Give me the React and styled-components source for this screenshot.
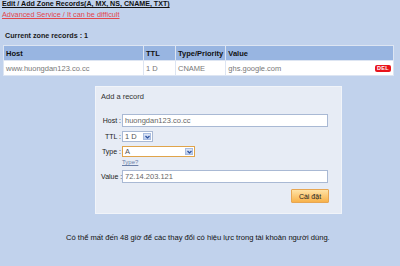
import React from "react";
import styled, { createGlobalStyle } from "styled-components";

const colors = {
  page: "#c1d2ec",
  header: "#98b5e1",
  panel: "#e7ecf5",
  text: "#1a1a1a",
  muted: "#777",
  link: "#e2474c",
  border: "#a9b9d4"
};

const GlobalStyle = createGlobalStyle`
  body {
    margin: 0;
    background: ${colors.page};
    font-family: "Liberation Sans", Arial, sans-serif;
    color: ${colors.text};
  }
`;

const Page = styled.div`
  width: 400px;
  height: 266px;
  overflow: hidden;
  background: ${colors.page};
  display: flex;
  flex-direction: column;
`;

const Title = styled.a`
  display: block;
  margin: -1px 0 0 2px;
  font-size: 7.1px;
  line-height: 10px;
  font-weight: bold;
  color: #111;
  text-decoration: underline;
`;

const AdvancedLink = styled.a`
  display: block;
  margin: 1px 0 0 2px;
  font-size: 7.3px;
  line-height: 10px;
  color: ${colors.link};
  text-decoration: underline;
`;

const SectionLabel = styled.div`
  margin: 11px 0 0 5px;
  font-size: 7.2px;
  line-height: 10px;
  font-weight: bold;
`;

const Table = styled.table`
  margin: 4px 0 0 3px;
  width: 391px;
  border-collapse: collapse;
  border: 1px solid #dde5f2;
  font-size: 7.5px;

  th,
  td {
    height: 14px;
    padding: 0 2px;
    text-align: left;
    border: 1px solid #dde5f2;
    white-space: nowrap;
  }

  th {
    background: ${colors.header};
    font-weight: bold;
    color: #111;
  }

  td {
    background: #fff;
    color: ${colors.muted};
  }
`;

const ValueCell = styled.td`
  position: relative;
`;

const DelBadge = styled.span`
  position: absolute;
  right: 2px;
  top: 4px;
  padding: 0 2px;
  height: 7px;
  line-height: 7px;
  font-size: 5.5px;
  font-weight: bold;
  color: #fff;
  background: #e8141b;
  border-radius: 2px;
  letter-spacing: 0.3px;
`;

const Panel = styled.div`
  margin: 10px 0 0 95px;
  width: 247px;
  height: 128px;
  box-sizing: border-box;
  background: ${colors.panel};
  border: 1px solid #f1f4f9;
  padding: 5px 0 0 5px;
`;

const PanelTitle = styled.div`
  font-size: 7.5px;
  line-height: 9px;
  color: #333;
`;

const FormGrid = styled.div`
  margin-top: 13px;
  display: grid;
  grid-template-columns: 20px 206px;
  column-gap: 1px;
  row-gap: 4px;
  align-items: center;
`;

const Label = styled.div`
  font-size: 7px;
  color: #222;
  text-align: right;
  white-space: nowrap;
`;

const TextInput = styled.div`
  height: 13px;
  box-sizing: border-box;
  border: 1px solid ${colors.border};
  background: #fff;
  font-size: 7.5px;
  line-height: 11px;
  padding-left: 2px;
  color: #666;
`;

const Select = styled.div`
  width: ${(p) => p.width}px;
  height: ${(p) => p.h}px;
  box-sizing: border-box;
  border: 1px solid ${(p) => (p.focused ? "#e0a44a" : colors.border)};
  background: #fff;
  display: flex;
  align-items: center;
  justify-content: space-between;
  font-size: 7.5px;
  padding: 0 1px 0 2px;
  color: #555;
`;

const Arrow = styled.span`
  width: 8px;
  height: 7px;
  background: linear-gradient(#dde6f7, #b7c9ec);
  border: 1px solid #a8bce0;
  box-sizing: border-box;
  display: flex;
  align-items: center;
  justify-content: center;
`;

const HelpLink = styled.a`
  font-size: 6px;
  line-height: 7px;
  color: #6b7fa8;
  text-decoration: underline;
  margin-top: -2px;
`;

const ButtonRow = styled.div`
  display: flex;
  justify-content: flex-end;
  padding-right: 12px;
  margin-top: 6px;
`;

const Button = styled.button`
  width: 38px;
  height: 14px;
  padding: 0;
  font-family: inherit;
  font-size: 7px;
  color: #222;
  border: 1px solid #e7a653;
  border-radius: 1px;
  background: linear-gradient(#ffe3a6, #f8b24a);
`;

const Footer = styled.div`
  margin-top: 19px;
  padding-left: 66px;
  font-size: 7.6px;
  line-height: 9px;
  color: #111;
  white-space: nowrap;
`;

const Chevron = () => (
  <svg width="5" height="4" viewBox="0 0 5 4">
    <path d="M0.5 1 L2.5 3 L4.5 1" stroke="#2a4f9c" strokeWidth="1.2" fill="none" />
  </svg>
);

export default function App() {
  return (
    <Page>
      <GlobalStyle />
      <Title>Edit / Add Zone Records(A, MX, NS, CNAME, TXT)</Title>
      <AdvancedLink>Advanced Service / It can be difficult</AdvancedLink>
      <SectionLabel>Current zone records : 1</SectionLabel>
      <Table>
        <thead>
          <tr>
            <th style={{ width: 135 }}>Host</th>
            <th style={{ width: 27 }}>TTL</th>
            <th style={{ width: 41 }}>Type/Priority</th>
            <th>Value</th>
          </tr>
        </thead>
        <tbody>
          <tr>
            <td>www.huongdan123.co.cc</td>
            <td>1 D</td>
            <td>CNAME</td>
            <ValueCell>
              ghs.google.com
              <DelBadge>DEL</DelBadge>
            </ValueCell>
          </tr>
        </tbody>
      </Table>
      <Panel>
        <PanelTitle>Add a record</PanelTitle>
        <FormGrid>
          <Label>Host :</Label>
          <TextInput>huongdan123.co.cc</TextInput>
          <Label>TTL :</Label>
          <Select width={31} h={11}>
            1 D
            <Arrow>
              <Chevron />
            </Arrow>
          </Select>
          <Label>Type :</Label>
          <Select width={73} h={11} focused>
            A
            <Arrow>
              <Chevron />
            </Arrow>
          </Select>
          <span />
          <HelpLink>Type?</HelpLink>
          <Label>Value :</Label>
          <TextInput>72.14.203.121</TextInput>
        </FormGrid>
        <ButtonRow>
          <Button>Cài đặt</Button>
        </ButtonRow>
      </Panel>
      <Footer>Có thể mất đến 48 giờ để các thay đổi có hiệu lực trong tài khoản người dùng.</Footer>
    </Page>
  );
}
